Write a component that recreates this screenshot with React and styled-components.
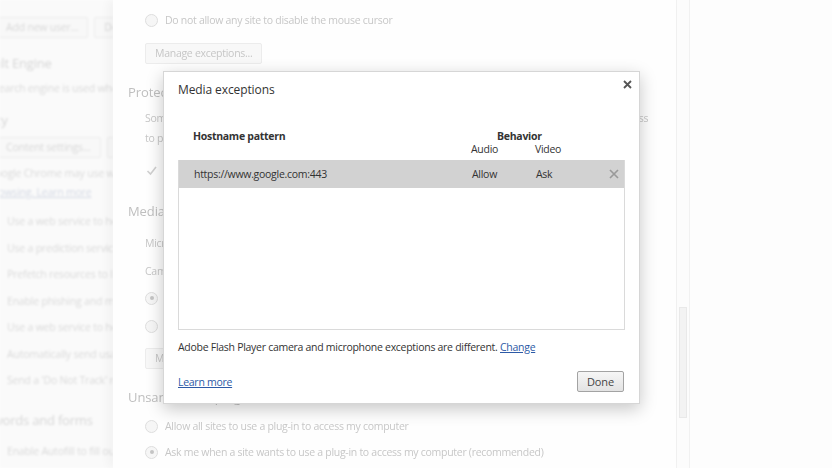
import React from "react";
import styled, { createGlobalStyle } from "styled-components";

const FONT = `"Open Sans", "Noto Sans", sans-serif`;

const GlobalStyle = createGlobalStyle`
  html, body { margin: 0; padding: 0; }
  body {
    background: #fdfdfd;
    font-family: ${FONT};
    overflow: hidden;
  }
`;

const Page = styled.div`
  position: relative;
  display: flex;
  width: 832px;
  height: 468px;
  overflow: hidden;
`;

/* ---------- faded sidebar ---------- */

const Sidebar = styled.div`
  flex: none;
  width: 113px;
  overflow: hidden;
  background: #fafafa;
  filter: blur(1.2px);
`;

const SideInner = styled.div`
  width: 360px;
  margin-left: -34px;
  padding-top: 17px;
  display: flex;
  flex-direction: column;
  color: #dadada;
  font-size: 10.5px;
  letter-spacing: -0.2px;
  white-space: nowrap;
`;

const SideHeading = styled.div`
  margin-top: ${(p) => p.$mt || 0}px;
  font-size: 13px;
  line-height: 20px;
  color: #d6d6d6;
`;

const SideText = styled.div`
  margin-top: ${(p) => p.$mt || 0}px;
  line-height: ${(p) => p.$lh || 20}px;
  padding-left: ${(p) => p.$indent || 0}px;
`;

const SideButtons = styled.div`
  display: flex;
  gap: 6px;
  margin-top: ${(p) => p.$mt || 0}px;
  padding-left: ${(p) => p.$indent || 0}px;
`;

const GhostButton = styled.div`
  height: 21px;
  box-sizing: border-box;
  padding: 0 9px;
  border: 1px solid #ececec;
  background: #f8f8f8;
  border-radius: 2px;
  line-height: 19px;
  font-size: 10.5px;
  color: ${(p) => p.$color || "#d8d8d8"};
`;

const SideLink = styled.span`
  text-decoration: underline;
  color: #d4d9e4;
`;

/* ---------- faded main column ---------- */

const Main = styled.div`
  flex: none;
  width: 563px;
  background: #fefefe;
  box-shadow: -5px 0 9px rgba(0, 0, 0, 0.035);
  overflow: hidden;
  padding-left: 15px;
  box-sizing: border-box;
  display: flex;
  flex-direction: column;
  color: #c7c7c7;
  font-size: 10.5px;
  letter-spacing: -0.28px;
  white-space: nowrap;
  filter: blur(0.35px);
`;

const Heading = styled.div`
  margin-top: ${(p) => p.$mt || 0}px;
  font-size: 13px;
  letter-spacing: -0.1px;
  line-height: 20px;
  color: #bfbfbf;
`;

const OptionRow = styled.div`
  display: flex;
  align-items: center;
  gap: 7px;
  height: 26px;
  margin-top: ${(p) => p.$mt || 0}px;
  padding-left: 17px;
`;

const Radio = styled.span`
  flex: none;
  box-sizing: border-box;
  width: 13px;
  height: 13px;
  border-radius: 50%;
  border: 1px solid #dedede;
  background: #f6f6f6;
  display: flex;
  align-items: center;
  justify-content: center;
  &::after {
    content: "";
    width: 4px;
    height: 4px;
    border-radius: 50%;
    background: ${(p) => (p.$checked ? "#c4c4c4" : "transparent")};
  }
`;

const CheckMark = styled.svg`
  flex: none;
  width: 13px;
  height: 13px;
`;

const Paragraph = styled.div`
  margin-top: ${(p) => p.$mt || 0}px;
  padding-left: 17px;
  line-height: 20px;
`;

const ButtonRow = styled.div`
  margin-top: ${(p) => p.$mt || 0}px;
  padding-left: 17px;
  display: flex;
`;

/* ---------- scrollbar / right ---------- */

const Scrollbar = styled.div`
  flex: none;
  width: 14px;
  box-sizing: border-box;
  border-left: 1px solid #f1f1f1;
  border-right: 1px solid #f1f1f1;
  background: #fcfcfc;
  padding-top: 307px;
  display: flex;
  justify-content: center;
`;

const Thumb = styled.div`
  width: 8px;
  height: 111px;
  box-sizing: border-box;
  background: #f3f3f3;
  border: 1px solid #e9e9e9;
`;

const RightPane = styled.div`
  flex: 1;
  background: #fdfdfd;
`;

/* ---------- dialog ---------- */

const Dialog = styled.div`
  position: absolute;
  left: 163px;
  top: 71px;
  width: 477px;
  height: 333px;
  box-sizing: border-box;
  background: #fff;
  border: 1px solid #d6d6d6;
  box-shadow: 0 5px 16px rgba(0, 0, 0, 0.22);
  color: #333;
  font-size: 10.5px;
  letter-spacing: -0.28px;
  display: flex;
  flex-direction: column;
`;

const DialogHeader = styled.div`
  display: flex;
  justify-content: space-between;
  align-items: flex-start;
  padding: 6px 6px 0 14px;
`;

const DialogTitle = styled.div`
  margin-top: 2px;
  font-size: 12px;
  letter-spacing: -0.1px;
  line-height: 20px;
  color: #333;
`;

const CloseButton = styled.button`
  width: 12px;
  height: 12px;
  padding: 0;
  border: 0;
  background: transparent;
  display: flex;
  align-items: center;
  justify-content: center;
`;

const DialogBody = styled.div`
  padding: 0 14px;
  display: flex;
  flex-direction: column;
`;

const Columns = `
  display: grid;
  grid-template-columns: 278px 64px 64px 1fr;
  align-items: center;
  padding-left: 15px;
`;

const TableHead = styled.div`
  ${Columns}
  margin-top: 29px;
  grid-template-rows: 14px 13px;
  line-height: 13px;
`;

const HeadBold = styled.div`
  font-weight: 700;
  grid-row: 1;
  grid-column: ${(p) => p.$col};
  padding-left: ${(p) => p.$pad || 0}px;
`;

const HeadSub = styled.div`
  grid-row: 2;
  grid-column: ${(p) => p.$col};
`;

const ListBox = styled.div`
  margin-top: 4px;
  height: 170px;
  box-sizing: border-box;
  border: 1px solid #dadada;
  border-top: 0;
`;

const ListRow = styled.div`
  ${Columns}
  height: 28px;
  background: ${(p) => (p.$selected ? "#d2d2d2" : "#fff")};
`;

const RemoveIcon = styled.svg`
  justify-self: end;
  margin-right: 5px;
  width: 10px;
  height: 10px;
`;

const Note = styled.div`
  margin-top: 8px;
  line-height: 18px;
`;

const Link = styled.a`
  color: #2d5aa6;
  text-decoration: underline;
  cursor: pointer;
`;

const DialogFooter = styled.div`
  margin-top: 15px;
  display: flex;
  justify-content: space-between;
  align-items: center;
  padding-right: 1px;
`;

const DoneButton = styled.button`
  height: 21px;
  padding: 0 9px;
  border: 1px solid #a3a3a3;
  border-radius: 2px;
  background: linear-gradient(#f6f6f6, #e3e3e3);
  font-family: ${FONT};
  font-size: 11px;
  letter-spacing: -0.1px;
  color: #444;
  line-height: 19px;
`;

const sideChecks = [
  "Use a web service to help resolve navigation errors",
  "Use a prediction service to help complete searches",
  "Prefetch resources to load pages more quickly",
  "Enable phishing and malware protection",
  "Use a web service to help resolve spelling errors",
  "Automatically send usage statistics and crash reports",
  "Send a 'Do Not Track' request with your browsing traffic",
];

const Check = () => (
  <CheckMark viewBox="0 0 13 13">
    <path d="M2.5 7 L5.5 10 L11 3" fill="none" stroke="#d0d0d0" strokeWidth="1.6" />
  </CheckMark>
);

export default function App() {
  return (
    <>
      <GlobalStyle />
      <Page>
        <Sidebar>
          <SideInner>
            <SideButtons $indent={30}>
              <GhostButton>Add new user...</GhostButton>
              <GhostButton>Delete</GhostButton>
            </SideButtons>
            <SideHeading $mt={15}>Default Engine</SideHeading>
            <SideText $mt={5} $indent={8}>
              The search engine is used when searching from the omnibox
            </SideText>
            <SideHeading $mt={12} $indent={0}>Privacy</SideHeading>
            <SideButtons $mt={7} $indent={30}>
              <GhostButton>Content settings...</GhostButton>
              <GhostButton>Clear browsing data...</GhostButton>
            </SideButtons>
            <SideText $mt={6} $lh={19} $indent={22}>
              Google Chrome may use web services to improve
              <br />
              <SideLink>browsing. Learn more</SideLink>
            </SideText>
            <SideText $mt={6} $lh={26.5} $indent={41}>
              {sideChecks.map((t) => (
                <div key={t}>{t}</div>
              ))}
            </SideText>
            <SideHeading $mt={16}>Passwords and forms</SideHeading>
            <SideText $mt={8} $lh={26} $indent={41}>
              Enable Autofill to fill out web forms in a single click
            </SideText>
          </SideInner>
        </Sidebar>

        <Main>
          <OptionRow $mt={7}>
            <Radio />
            Do not allow any site to disable the mouse cursor
          </OptionRow>
          <ButtonRow $mt={10}>
            <GhostButton $color="#c6c6c6">Manage exceptions...</GhostButton>
          </ButtonRow>
          <Heading $mt={18}>Protected content</Heading>
          <Paragraph $mt={6}>
            Some content services use machine identifiers to uniquely identify you for the purposes of authorising access
            <br />
            to protected content.
          </Paragraph>
          <OptionRow $mt={9}>
            <Check />
            Allow identifiers for protected content (computer restart may be required)
          </OptionRow>
          <Heading $mt={18}>Media</Heading>
          <OptionRow $mt={9}>Microphone: Default</OptionRow>
          <OptionRow $mt={2}>Camera: Default</OptionRow>
          <OptionRow $mt={1}>
            <Radio $checked />
            Ask when a site requires access to your camera and microphone (recommended)
          </OptionRow>
          <OptionRow $mt={2}>
            <Radio />
            Do not allow sites to access your camera and microphone
          </OptionRow>
          <ButtonRow $mt={9}>
            <GhostButton $color="#c6c6c6">Manage exceptions...</GhostButton>
          </ButtonRow>
          <Heading $mt={18}>Unsandboxed plug-in access</Heading>
          <OptionRow $mt={6}>
            <Radio />
            Allow all sites to use a plug-in to access my computer
          </OptionRow>
          <OptionRow>
            <Radio $checked />
            Ask me when a site wants to use a plug-in to access my computer (recommended)
          </OptionRow>
        </Main>

        <Scrollbar>
          <Thumb />
        </Scrollbar>
        <RightPane />

        <Dialog>
          <DialogHeader>
            <DialogTitle>Media exceptions</DialogTitle>
            <CloseButton aria-label="Close">
              <svg width="9" height="9" viewBox="0 0 9 9">
                <path d="M1 1 L8 8 M8 1 L1 8" stroke="#555" strokeWidth="1.8" />
              </svg>
            </CloseButton>
          </DialogHeader>
          <DialogBody>
            <TableHead>
              <HeadBold $col="1">Hostname pattern</HeadBold>
              <HeadBold $col="2 / 4" $pad={26}>Behavior</HeadBold>
              <HeadSub $col="2">Audio</HeadSub>
              <HeadSub $col="3">Video</HeadSub>
            </TableHead>
            <ListBox>
              <ListRow $selected>
                <span>https://www.google.com:443</span>
                <span>Allow</span>
                <span>Ask</span>
                <RemoveIcon viewBox="0 0 10 10">
                  <path d="M1 1 L9 9 M9 1 L1 9" stroke="#9a9a9a" strokeWidth="1.7" />
                </RemoveIcon>
              </ListRow>
            </ListBox>
            <Note>
              Adobe Flash Player camera and microphone exceptions are different. <Link>Change</Link>
            </Note>
            <DialogFooter>
              <Link>Learn more</Link>
              <DoneButton>Done</DoneButton>
            </DialogFooter>
          </DialogBody>
        </Dialog>
      </Page>
    </>
  );
}
